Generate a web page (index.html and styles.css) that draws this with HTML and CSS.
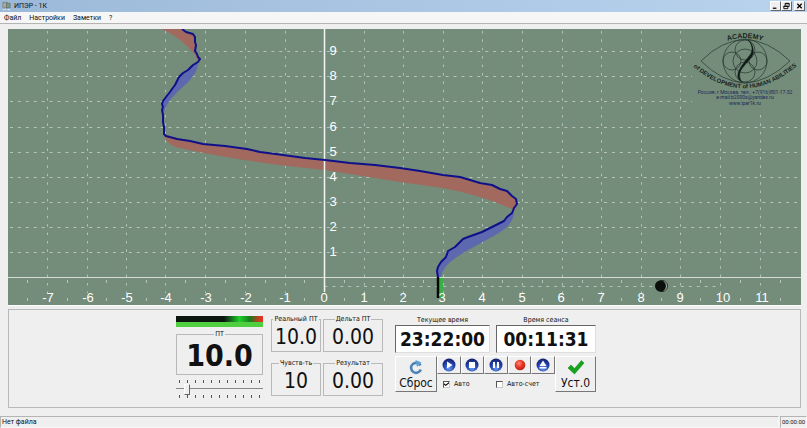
FILE: index.html
```
<!DOCTYPE html>
<html lang="ru">
<head>
<meta charset="utf-8">
<title>ИПЭР - 1К</title>
<link rel="stylesheet" href="styles.css">
</head>
<body>
<header class="titlebar">
  <svg class="app-icon" viewBox="0 0 10 10" aria-hidden="true"><path d="M1 1h5v6H1z" fill="#a9a99a" stroke="#6c7468" stroke-width=".7"/><path d="M5 2h4v5H5z" fill="#7e9a8c" stroke="#56685e" stroke-width=".7"/><path d="M1 9h2M4 8v1M6 9h3" stroke="#eee"/></svg>
  <h1 class="title">ИПЭР - 1К</h1>
  <div class="window-buttons">
    <button class="win" aria-label="Свернуть"><svg viewBox="0 0 10 9"><path d="M2 7h4" stroke="#000" stroke-width="1.4"/></svg></button>
    <button class="win" aria-label="Восстановить"><svg viewBox="0 0 10 9"><path d="M3.5 4V1.500h4.500v3.500H6.500M2 4.500h4.500v3H2zM3.500 2h4.500M2 5h4.500" fill="none" stroke="#000"/></svg></button>
    <button class="win close" aria-label="Закрыть"><svg viewBox="0 0 10 9"><path d="M2.500 2l5 5M7.500 2l-5 5" stroke="#000" stroke-width="1.400"/></svg></button>
  </div>
</header>
<nav class="menu">
  <a href="#">Файл</a><a href="#">Настройки</a><a href="#">Заметки</a><a href="#">?</a>
</nav>
<main class="workspace">
  <svg class="chart" viewBox="8 29 793 276" role="img" aria-label="График">
    <rect x="8" y="29" width="793" height="276" fill="#748c7a"/>
    <g class="grid-h">
      <path d="M10 51.500H692M10 76.500H692M10 101.500H692M10 127.500H800M10 152.500H800M10 177.500H800M10 202.500H800M10 227.500H800M10 252.500H800"/>
      <path d="M324.500 286.500H720"/>
    </g>
    <g class="grid-v">
      <path d="M47.500 30V293M87.500 30V293M126.500 30V293M165.500 30V293M205.500 30V293M245.500 30V293M285.500 30V293M364.500 30V293M403.500 30V293M443.500 30V293M482.500 30V293M522.500 30V293M562.500 30V293M601.500 30V293M641.500 30V293M680.500 30V293M720.500 114V293M760.500 114V293"/>
    </g>
    <g class="ticks">
      <path d="M27.500 280V302M67.500 280V302M106.500 280V302M146.500 280V302M185.500 280V302M225.500 280V302M265.500 280V302M304.500 280V302M344.500 280V302M384.500 280V302M423.500 280V302M463.500 280V302M502.500 280V302M542.500 280V302M582.500 280V302M621.500 280V302M661.500 280V302M700.500 280V302M740.500 280V302M780.500 280V302"/>
    </g>
    <path d="M162 29Q182 38 195 55L198 61L200 59L196 52V45L195 36L182 29Z" class="red"/>
    <path d="M198 61C198 70 194 75 190 80C180 91 167 98 164 114L162 107L163 101L170 92L175 85L179 77L188 70L193 65Z" class="blue"/>
    <path d="M164 135C166 143 174 147 180 148Q225 158 283 165.500L325 170L400 182L443 188Q485 196 514 210L517 204L516 199L512 196L507 191L492 185L480 183L460 178L443 175L400 168L350 163L325 160L283 155L247 149L203 144Z" class="red"/>
    <path d="M514 209C515 221 506 228 503 230C490 240 451 256 445 268Q442 271 441 277H437V272L441 263L446 257L448 251L455 247L463 239L482 232L500 223L507 217L512 213Z" class="blue"/>
    <path d="M8 277.500H801" stroke="#d5dcd6"/>
    <path d="M324.500 29V292" stroke="#f2f5f2" stroke-width="1.500"/>
    <path class="trace" d="M182 29L186 32L193 34L195 37V42L196 45L195 51L197 54L198 57L200 59L198 62L193 65L190 68L188 70L183 73L179 77L177 81L175 85L172 89L170 92L166 97L163 101L162 104L163 107L162 110L163 115L163 122L164 127V134L166 136L177 139L190 141L203 144L225 146L247 149L260 152L283 155L305 158L325 160L350 163L375 165L400 168L420 171L443 175L460 177L480 183L492 185L500 189L507 191L512 196L516 199L517 204L514 208L512 213L507 217L504 221L500 223L490 228L482 232L468 237L463 239L455 247L448 251L446 257L441 262L438 267L437 271L438 277"/>
    <path d="M438 277V298" stroke="#050805" stroke-width="2.500"/>
    <path d="M441.500 278V298" stroke="#2fb53d" stroke-width="3" stroke-dasharray="3 .5"/>
    <g class="numbers">
      <text x="333" y="55">9</text><text x="333" y="80">8</text><text x="333" y="105">7</text><text x="333" y="131">6</text><text x="333" y="156">5</text><text x="333" y="181">4</text><text x="333" y="206">3</text><text x="333" y="231">2</text><text x="333" y="256">1</text>
      <text x="48" y="302">-7</text><text x="88" y="302">-6</text><text x="127" y="302">-5</text><text x="166" y="302">-4</text><text x="206" y="302">-3</text><text x="246" y="302">-2</text><text x="285" y="302">-1</text><text x="324" y="302">0</text><text x="364" y="302">1</text><text x="403" y="302">2</text><text x="442" y="302">3</text><text x="482" y="302">4</text><text x="522" y="302">5</text><text x="561" y="302">6</text><text x="601" y="302">7</text><text x="641" y="302">8</text><text x="680" y="302">9</text><text x="723" y="302">10</text><text x="762" y="302">11</text>
    </g>
    <circle cx="662" cy="286" r="5.500" fill="none" stroke="#0c120d" stroke-width=".8"/>
    <circle cx="660.500" cy="286" r="5.500" fill="#0b0f0c"/>
    <path d="M664.500 281.500A6 6 0 0 1 664.500 290.500" fill="none" stroke="#a7b3a9" stroke-width=".7"/>
    <g class="logo">
      <path class="logo-line" d="M701 61Q722 40 745 39.500Q768 40 790 61Q768 82 745 83Q722 82 701 61Z"/>
      <circle class="logo-line" cx="745" cy="61" r="22"/>
      <circle class="logo-line" cx="745" cy="61" r="12"/>
      <circle class="logo-line" cx="745" cy="50" r="10"/>
      <circle class="logo-line" cx="745" cy="72" r="10"/>
      <circle class="logo-line" cx="732" cy="61" r="9"/>
      <circle class="logo-line" cx="758" cy="61" r="9"/>
      <path d="M748 40C753 45 753 51 750 55C746 60 739 68 738 74C737 78 740 81 742 82C739 78 739 74 741 70C745 64 751 59 753 54C754 48 752 43 748 40Z" fill="#101a16" stroke="#101a16" stroke-width=".5"/>
      <path id="arc-top" d="M722 43Q745 33 768 43" fill="none"/>
      <path id="arc-bottom" d="M690 64Q745 113 800 63" fill="none"/>
      <text class="arc-title"><textPath href="#arc-top" startOffset="50%">ACADEMY</textPath></text>
      <text class="arc-sub"><textPath href="#arc-bottom" startOffset="50%">of DEVELOPMENT of HUMAN ABILITIES</textPath></text>
      <text class="contact" x="745" y="94">Россия, г.Москва. тел.: +7(916)801-17-32</text>
      <text class="contact" x="745" y="99">e-mail:b2000s@yandex.ru</text>
      <text class="contact" x="745" y="105">www.iper1k.ru</text>
    </g>
  </svg>
  <section class="panel">
    <div class="level">
      <div class="meter-black"></div>
      <div class="meter-green"></div>
      <fieldset class="group main-value"><legend>ПТ</legend><output>10.0</output></fieldset>
      <input class="slider" type="range" min="0" max="10" value="1" aria-label="Чувствительность">
    </div>
    <div class="values">
      <fieldset class="group"><legend>Реальный ПТ</legend><output>10.0</output></fieldset>
      <fieldset class="group"><legend>Дельта ПТ</legend><output>0.00</output></fieldset>
      <fieldset class="group"><legend>Чувств-ть</legend><output>10</output></fieldset>
      <fieldset class="group"><legend>Результат</legend><output>0.00</output></fieldset>
    </div>
    <div class="session">
      <div class="clocks">
        <label class="clock-label" for="now">Текущее время</label>
        <label class="clock-label" for="elapsed">Время сеанса</label>
        <input class="clock" id="now" value="23:22:00" readonly>
        <input class="clock" id="elapsed" value="00:11:31" readonly>
      </div>
      <div class="actions">
        <button class="big"><svg class="big-icon" viewBox="0 0 16 16"><path d="M12.500 6.500A5 5 0 1 0 12.800 10.500" fill="none" stroke="#4c84b8" stroke-width="2.600"/><path d="M7.500 1l6 2.500-4.500 4.500z" fill="#5f9fd2"/></svg>Сброс</button>
        <div class="transport">
          <div class="media">
            <button aria-label="Пуск"><svg viewBox="0 0 14 14"><use href="#ball"/><path d="M5 3.500l5.500 3.500L5 10.500z" fill="#fff"/></svg></button>
            <button aria-label="Стоп"><svg viewBox="0 0 14 14"><use href="#ball"/><path d="M4 4h6v6H4z" fill="#fff"/></svg></button>
            <button aria-label="Пауза"><svg viewBox="0 0 14 14"><use href="#ball"/><path d="M4 4h2v6H4zM8 4h2v6H8z" fill="#fff"/></svg></button>
            <button aria-label="Запись"><svg viewBox="0 0 14 14"><circle cx="7" cy="7" r="5.300" fill="url(#red-ball)"/></svg></button>
            <button aria-label="Извлечь"><svg viewBox="0 0 14 14"><use href="#ball"/><path d="M7 2.500l3.500 5.500h-7zM3.500 9h7v1.500h-7z" fill="#fff"/></svg></button>
          </div>
          <div class="checks">
            <label><input type="checkbox" checked>Авто</label>
            <label><input type="checkbox">Авто-счет</label>
          </div>
        </div>
        <button class="big"><svg class="big-icon" viewBox="0 0 16 16"><path d="M0 9l3-3 3.500 3.500L13.500 1.500 16 4 6.500 15z" fill="#14a51c" stroke="#0a7c10" stroke-width=".5"/></svg>Уст.0</button>
      </div>
    </div>
  </section>
</main>
<footer class="status"><span class="file">Нет файла</span><span class="timer">00:00:00</span></footer>
<svg class="defs" aria-hidden="true">
  <defs>
    <radialGradient id="blue-ball" cx=".5" cy=".75" r=".75"><stop offset="0" stop-color="#6c9df0"/><stop offset=".5" stop-color="#2748b4"/><stop offset="1" stop-color="#101c66"/></radialGradient>
    <radialGradient id="red-ball" cx=".4" cy=".35" r=".7"><stop offset="0" stop-color="#ff8c78"/><stop offset=".5" stop-color="#e83626"/><stop offset="1" stop-color="#b81d14"/></radialGradient>
    <g id="ball"><circle cx="7" cy="7" r="6.500" fill="url(#blue-ball)"/></g>
  </defs>
</svg>
</body>
</html>
```
FILE: styles.css
```
* { box-sizing: border-box; }
body {
  margin: 0;
  min-height: 100vh;
  display: flex;
  flex-direction: column;
  background: #efefef;
  color: #111;
  font: 7px/10px Roboto, sans-serif;
}
button, input { font: inherit; color: inherit; margin: 0; padding: 0; border-radius: 0; }

.titlebar {
  display: flex;
  align-items: center;
  height: 12px;
  padding: 0 2px;
  background: linear-gradient(90deg, #9db9d9, #b9d3ee);
}
.app-icon { width: 9px; height: 10px; }
.title { flex: 1; margin: 0 0 0 3px; font-size: 7px; font-weight: 400; line-height: 12px; }
.window-buttons { display: flex; }
.win {
  display: flex;
  width: 11px;
  height: 10px;
  background: #efefef;
  border: 1px solid;
  border-color: #fff #666 #666 #fff;
}
.win svg { width: 100%; height: 100%; }
.close { margin-left: 2px; }

.menu {
  display: flex;
  gap: 8px;
  height: 12px;
  padding: 0 4px;
  background: #f6f6f6;
  border-bottom: 1px solid #b4b4b4;
  line-height: 12px;
}
.menu a { color: inherit; text-decoration: none; }

.workspace { flex: 1; padding: 5px 6px 0 8px; }
.chart { display: block; width: 100%; border-bottom: 1px solid #fff; }
.grid-h path { stroke: #b5c2b8; stroke-dasharray: 3 4.920; stroke-dashoffset: 0; }
.grid-v path { stroke: #b5c2b8; stroke-dasharray: 2.500 5.900; stroke-dashoffset: -1; }
.ticks path { stroke: #b8c5ba; stroke-dasharray: 3 15; }
.red { fill: #a2695f; }
.blue { fill: #5d69ae; }
.trace { fill: none; stroke: #10108a; stroke-width: 2; stroke-linejoin: round; }
.numbers { font: 13px "Liberation Sans", sans-serif; fill: #fff; text-anchor: middle; }
.logo { text-anchor: middle; font-family: "Liberation Sans", sans-serif; fill: #16241f; }
.logo-line { fill: none; stroke: #25362e; stroke-width: .7; }
.arc-title { font-size: 7px; font-weight: 700; }
.arc-sub { font-size: 6px; font-weight: 700; }
.contact { font-family: Roboto, sans-serif; font-size: 5px; fill: #1c2a58; }

.panel {
  display: flex;
  align-items: flex-start;
  gap: 8px;
  height: 99px;
  margin: 3px 0 0;
  padding: 6px 8px 0 167px;
  border: 1px solid #b9b9b9;
}
.level { width: 87px; }
.meter-black { height: 6px; background: linear-gradient(90deg, #0c1410 55%, #1fd02a 73%, #1a7a1c 85%, #e0341f 97%); }
.meter-green { height: 5px; background: #4fce40; }
.group {
  min-width: 0;
  margin: 0;
  padding: 0;
  border: 1px solid #b9b9b9;
  text-align: center;
  font-family: "DejaVu Sans Condensed", "DejaVu Sans", sans-serif;
}
.group legend { margin: 0 auto; padding: 0 1px; font-size: 7px; line-height: 8px; }
.group output { display: block; font-size: 21px; line-height: 28px; }
.group.main-value { margin-top: 3px; }
.group.main-value output { font-size: 30px; font-weight: 700; line-height: 36px; }
.slider {
  display: block;
  appearance: none;
  width: 100%;
  height: 18px;
  margin-top: 5px;
  background:
    repeating-linear-gradient(90deg, #555 0 1px, transparent 1px 8px) 3px 0 / 82px 3px no-repeat,
    repeating-linear-gradient(90deg, #555 0 1px, transparent 1px 8px) 3px 15px / 82px 3px no-repeat,
    linear-gradient(#888, #888) 0 8px / 100% 1px no-repeat;
}
.slider::-webkit-slider-thumb {
  appearance: none;
  width: 6px;
  height: 11px;
  background: #efefef;
  border: 1px solid;
  border-color: #fff #666 #666 #fff;
}
.values {
  display: grid;
  grid-template-columns: 50px 60px;
  gap: 7px 2px;
  margin-top: -1px;
}

.session { width: 201px; margin-left: 4px; }
.clocks {
  display: grid;
  grid-template-columns: 95px 100px;
  column-gap: 6px;
  text-align: center;
}
.clock-label { font: 7px/9px Roboto, sans-serif; font-family: "DejaVu Sans Condensed", "DejaVu Sans", sans-serif; }
.clock {
  width: 100%;
  height: 28px;
  background: #fff;
  border: 1px solid;
  border-color: #666 #ddd #ddd #666;
  text-align: center;
  font: 700 19px "DejaVu Sans Condensed", "DejaVu Sans", sans-serif;
}
.actions { display: grid; grid-template-columns: 42px 1fr 41px; margin-top: 3px; }
.actions button {
  background: #efefef;
  border: 1px solid;
  border-color: #fff #777 #777 #fff;
}
.big {
  display: flex;
  flex-direction: column;
  align-items: center;
  height: 36px;
}
.actions .big { font: 12px/16px "DejaVu Sans Condensed", "DejaVu Sans", sans-serif; }
.big-icon { width: 16px; height: 16px; margin-top: 2px; }
.media { display: grid; grid-template-columns: repeat(5, 1fr); }
.media button { display: grid; place-items: center; height: 18px; }
.media svg { width: 14px; height: 14px; }
.checks {
  display: grid;
  grid-template-columns: 53px 1fr;
  padding: 6px 6px 0;
  font: 7px/8px "DejaVu Sans Condensed", "DejaVu Sans", sans-serif;
}
.checks label { display: flex; align-items: center; gap: 4px; }
.checks input {
  appearance: none;
  display: grid;
  place-items: center;
  width: 7px;
  height: 7px;
  background: #fff;
  border: 1px solid;
  border-color: #555 #ccc #ccc #555;
}
.checks input:checked::after {
  content: "";
  width: 5px;
  height: 4px;
  background: #111;
  clip-path: polygon(0 30%, 35% 60%, 100% 0, 100% 40%, 35% 100%, 0 70%);
}

.status {
  display: grid;
  grid-template-columns: 1fr 27px;
  gap: 1px;
  height: 12px;
  line-height: 10px;
}
.status span { padding-left: 1px; border: 1px solid; border-color: #b4b4b4 #f8f8f8 #f8f8f8 #b4b4b4; white-space: nowrap; }
.status .timer { font-size: 6px; }
.defs { position: absolute; width: 0; height: 0; }
```
